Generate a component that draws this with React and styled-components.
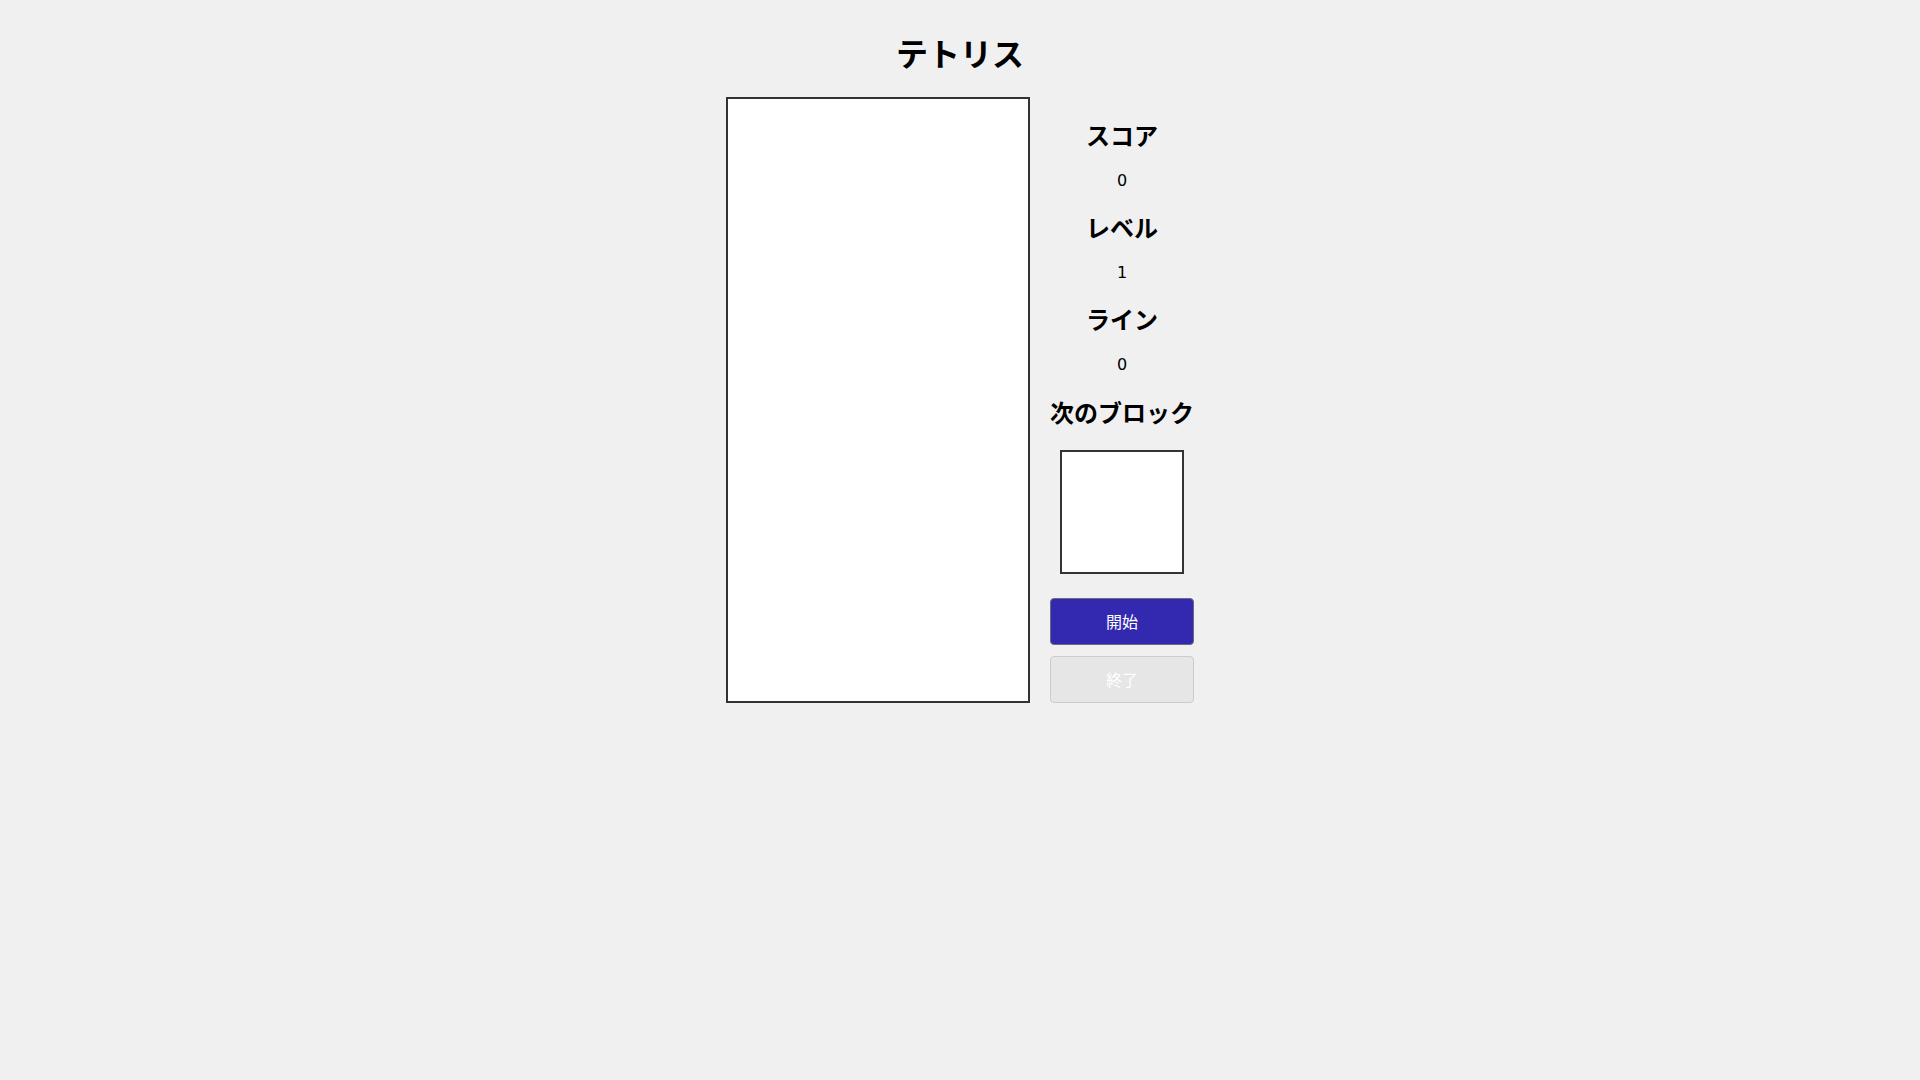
import React from "react";
import styled, { createGlobalStyle } from "styled-components";

const GlobalStyle = createGlobalStyle`
  body {
    margin: 0;
    background-color: #f0f0f0;
    font-family: "DejaVu Sans", "Noto Sans CJK JP", sans-serif;
    color: #000;
  }
`;

const Page = styled.div`
  display: flex;
  flex-direction: column;
  align-items: center;
  padding: 8px;
  min-height: 1064px;
`;

const Title = styled.h1`
  font-size: 32px;
  font-weight: 700;
  margin: 21.44px 0;
`;

const Game = styled.div`
  display: flex;
  align-items: flex-start;
  gap: 20px;
`;

const Board = styled.div`
  width: 300px;
  height: 602px;
  background-color: #fff;
  border: 2px solid #333;
`;

const Panel = styled.div`
  display: flex;
  flex-direction: column;
  text-align: center;
`;

const Label = styled.h2`
  font-size: 24px;
  font-weight: 700;
  margin: 19.5px 0 0;
  white-space: nowrap;
  &:first-child {
    margin-top: 20px;
  }
`;

const Value = styled.p`
  font-size: 16px;
  margin: 18.8px 0 0;
`;

const NextBox = styled.div`
  align-self: center;
  width: 120px;
  height: 120px;
  margin-top: 21px;
  background-color: #fff;
  border: 2px solid #333;
`;

const Button = styled.button`
  height: 47px;
  margin-top: ${(p) => (p.$first ? "24px" : "11px")};
  font-family: "DejaVu Sans", "Noto Sans CJK JP", sans-serif;
  font-size: 16px;
  color: #fff;
  background-color: ${(p) => (p.disabled ? "#e6e6e6" : "#3329b0")};
  border: 1px solid ${(p) => (p.disabled ? "#cccccc" : "#6b6b7a")};
  border-radius: 4px;
  cursor: ${(p) => (p.disabled ? "default" : "pointer")};
`;

const stats = [
  { label: "スコア", value: 0 },
  { label: "レベル", value: 1 },
  { label: "ライン", value: 0 },
];

export default function App() {
  return (
    <>
      <GlobalStyle />
      <Page>
        <Title>テトリス</Title>
        <Game>
          <Board />
          <Panel>
            {stats.map((s) => (
              <React.Fragment key={s.label}>
                <Label>{s.label}</Label>
                <Value>{s.value}</Value>
              </React.Fragment>
            ))}
            <Label>次のブロック</Label>
            <NextBox />
            <Button $first>開始</Button>
            <Button disabled>終了</Button>
          </Panel>
        </Game>
      </Page>
    </>
  );
}
